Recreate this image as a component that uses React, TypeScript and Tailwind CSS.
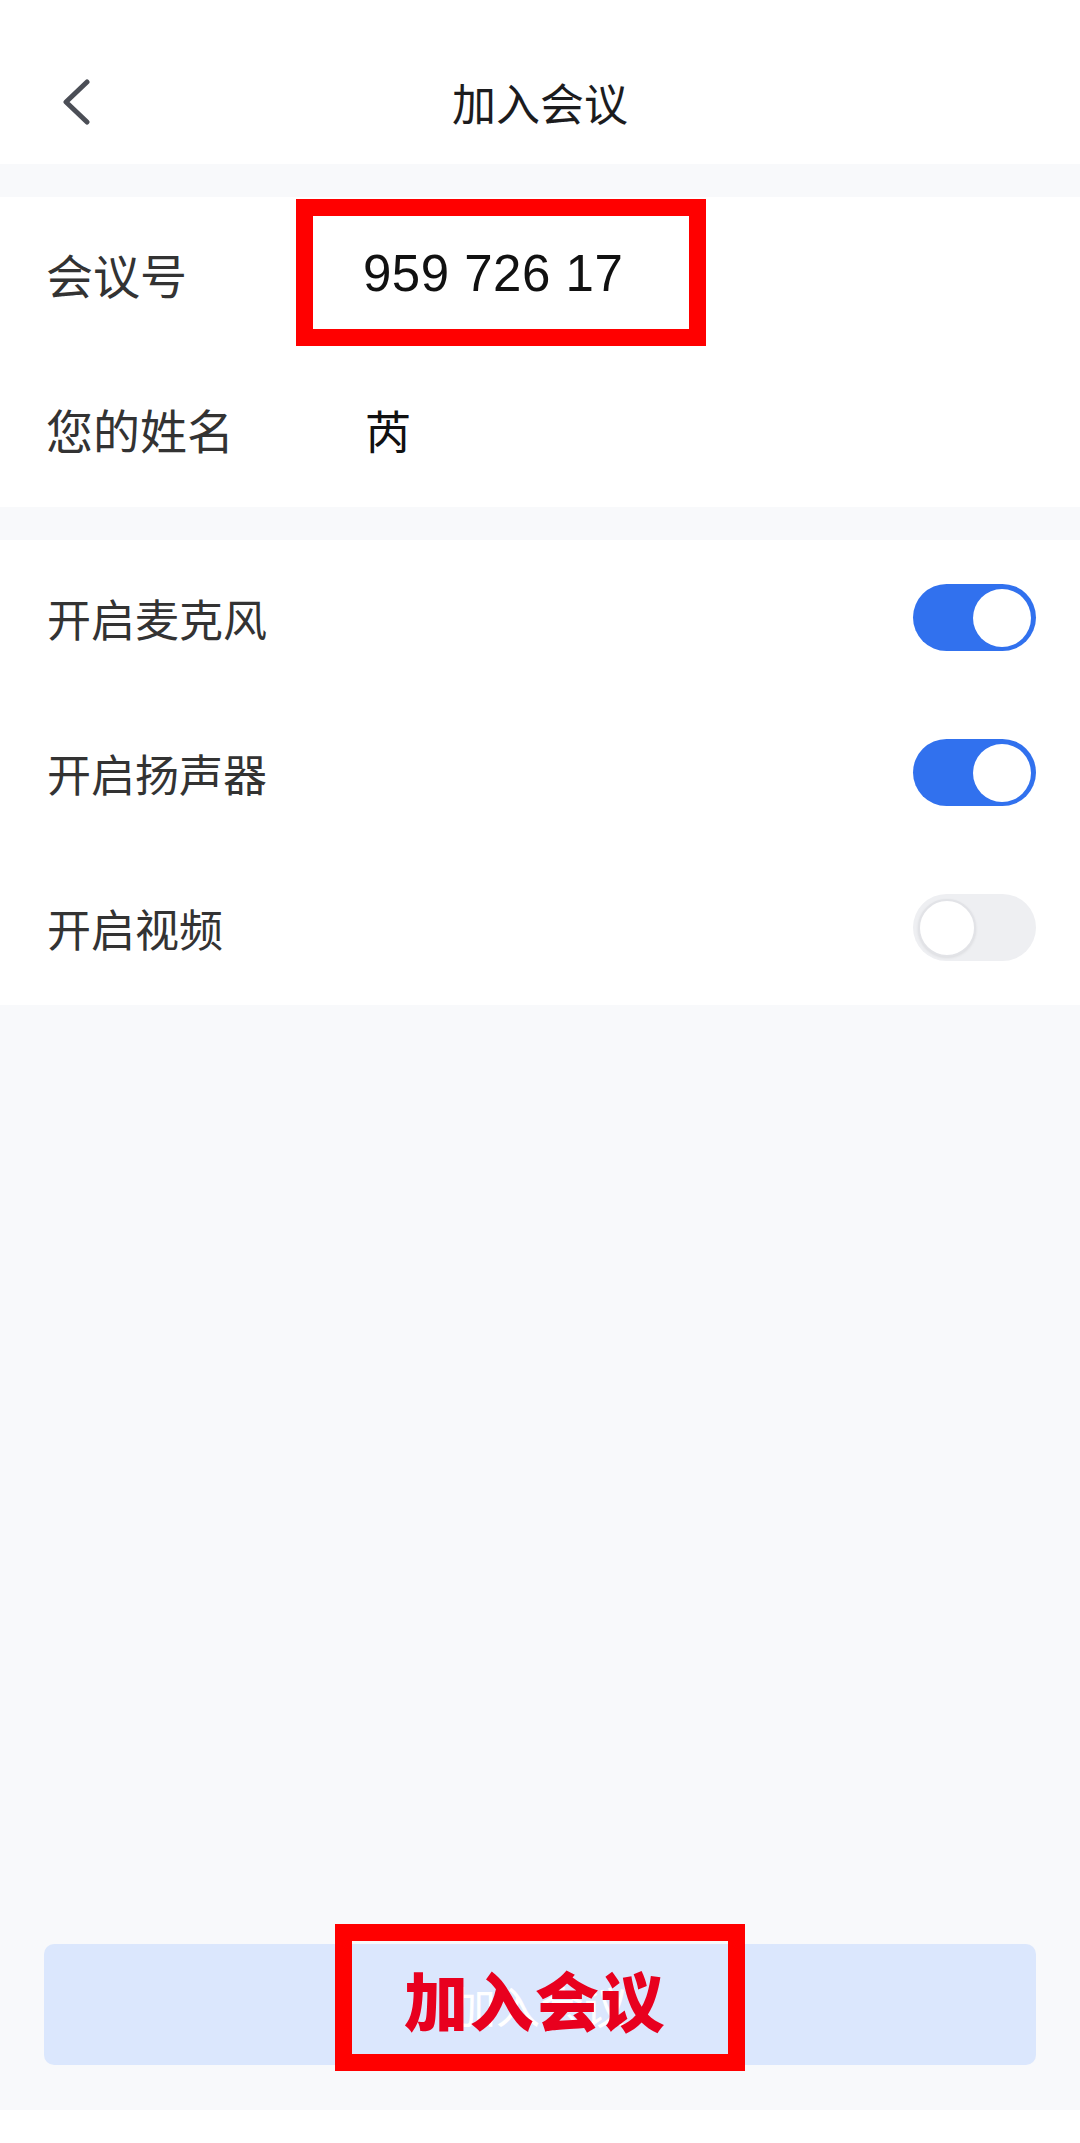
import React, { useState } from 'react'

const cjk = "font-['Noto_Sans_CJK_SC','Noto_Sans',sans-serif]"

type ToggleProps = { on: boolean; onChange: () => void }

const Toggle: React.FC<ToggleProps> = ({ on, onChange }) => (
  <button
    onClick={onChange}
    className={`flex h-[67px] w-[123px] items-center rounded-full px-[5px] ${
      on ? 'justify-end bg-[#3171ee]' : 'justify-start bg-[#eeeff2]'
    }`}
  >
    <span
      className={`block h-[58px] w-[58px] rounded-full bg-white ${
        on ? '' : 'border-2 border-[#e2e3e7] shadow-[0_1px_3px_rgba(0,0,0,0.08)]'
      }`}
    />
  </button>
)

export default function App() {
  const [mic, setMic] = useState(true)
  const [speaker, setSpeaker] = useState(true)
  const [video, setVideo] = useState(false)

  const switches = [
    { label: '开启麦克风', on: mic, toggle: () => setMic(!mic) },
    { label: '开启扬声器', on: speaker, toggle: () => setSpeaker(!speaker) },
    { label: '开启视频', on: video, toggle: () => setVideo(!video) },
  ]

  return (
    <div className={`relative flex h-[2143px] w-[1080px] flex-col bg-white ${cjk}`}>
      {/* 顶部导航 */}
      <header className="h-[164px] shrink-0 bg-white pt-[62px]">
        <div className="grid h-[80px] grid-cols-[1fr_auto_1fr] items-center">
          <div className="pl-[62px]">
            <svg width="30" height="46" viewBox="0 0 30 46" fill="none">
              <polyline
                points="25,3 4,23 25,43"
                stroke="#4b4e56"
                strokeWidth="5"
                strokeLinecap="round"
                strokeLinejoin="round"
              />
            </svg>
          </div>
          <h1 className="text-[44px] leading-none text-[#1c1c1e]">加入会议</h1>
          <div />
        </div>
      </header>

      <div className="h-[33px] shrink-0 bg-[#f8f9fb]" />

      {/* 会议信息 */}
      <section className="shrink-0 bg-white">
        <div className="flex h-[155px] items-center pl-[46px]">
          <span className="w-[317px] text-[47px] text-[#333]">会议号</span>
          <span className="font-['Liberation_Sans',sans-serif] text-[51px] tracking-[0.5px] text-[#111]">
            959 726 17
          </span>
        </div>
        <div className="flex h-[155px] items-center pl-[46px]">
          <span className="w-[319px] text-[47px] text-[#333]">您的姓名</span>
          <span className="text-[46px] text-[#111]">芮</span>
        </div>
      </section>

      <div className="h-[33px] shrink-0 bg-[#f8f9fb]" />

      {/* 开关设置 */}
      <section className="shrink-0 bg-white">
        {switches.map((s) => (
          <div key={s.label} className="flex h-[155px] items-center justify-between pl-[47px] pr-[44px]">
            <span className="text-[44px] text-[#333]">{s.label}</span>
            <Toggle on={s.on} onChange={s.toggle} />
          </div>
        ))}
      </section>

      {/* 底部按钮 */}
      <div className="flex flex-1 flex-col justify-end bg-[#f8f9fb] px-[44px] pb-[45px]">
        <button className="flex h-[121px] w-full items-center justify-center rounded-[10px] bg-[#dbe7fd] text-[44px] text-white">
          加入会议
        </button>
      </div>
      <div className="h-[33px] shrink-0 bg-white" />

      {/* 红框标注 */}
      <div className="absolute left-[296px] top-[199px] h-[147px] w-[410px] border-[17px] border-[#ff0000]" />
      <div className="absolute left-[335px] top-[1924px] flex h-[147px] w-[410px] items-center justify-center border-[17px] border-[#ff0000] pr-[10px]">
        <span className="text-[64px] font-black leading-none tracking-[1.5px] text-[#e8001e]">加入会议</span>
      </div>
    </div>
  )
}
